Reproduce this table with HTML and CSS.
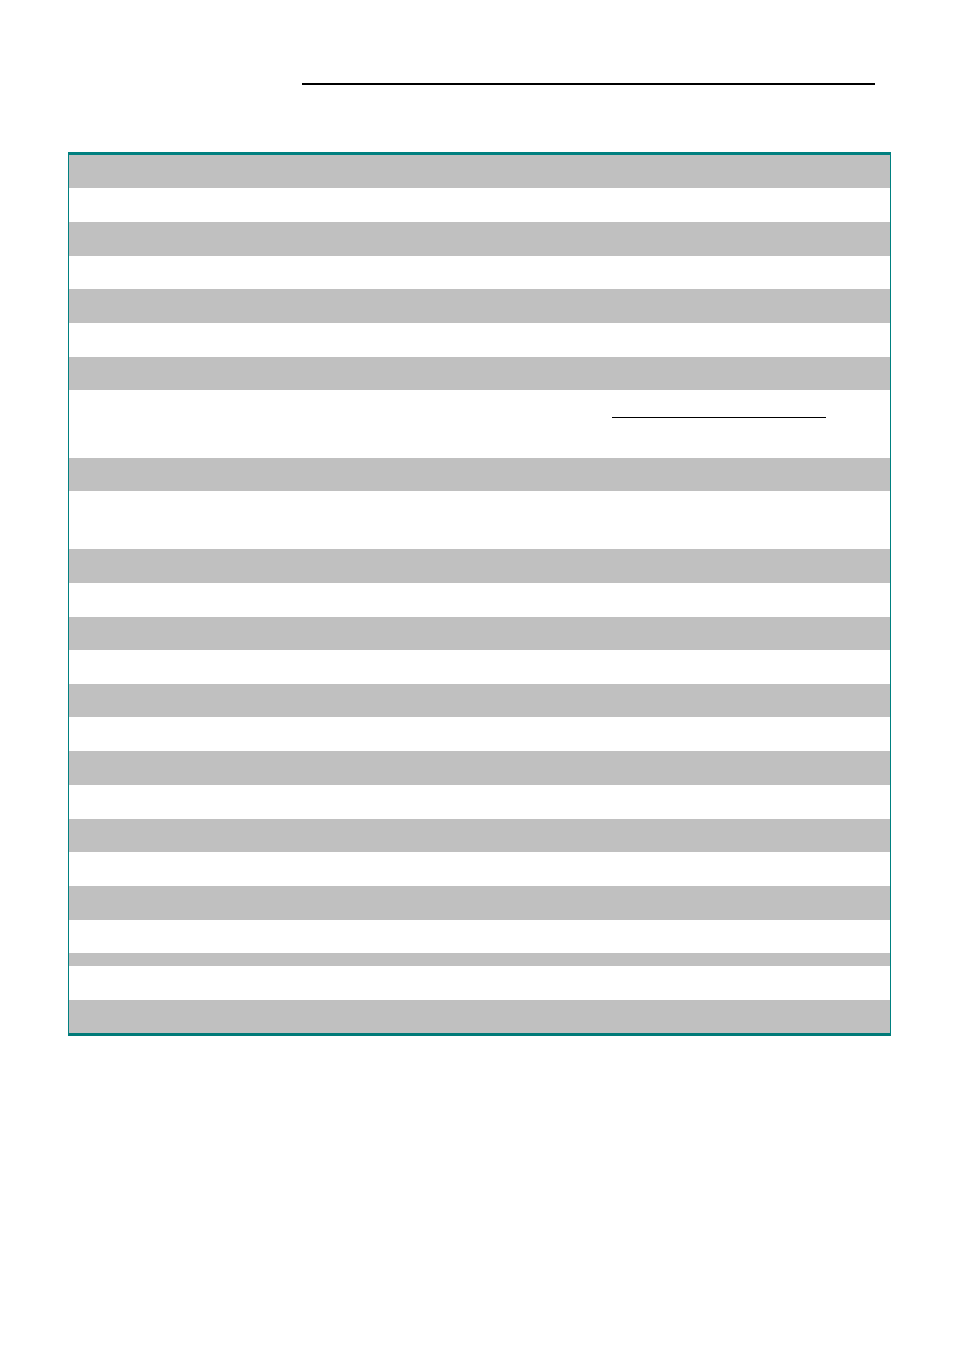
FILE: index.html
```html
<!DOCTYPE html>
<html>
<head>
<meta charset="utf-8">
<link rel="stylesheet" href="styles.css">
</head>
<body>
<div class="page">
  <div class="title-rule"></div>
  <div class="table">
    <div class="row g h33"></div>
    <div class="row w h34"></div>
    <div class="row g h34"></div>
    <div class="row w h33"></div>
    <div class="row g h34"></div>
    <div class="row w h34"></div>
    <div class="row g h33"></div>
    <div class="row w h68"><div class="field-line"></div></div>
    <div class="row g h33"></div>
    <div class="row w h58"></div>
    <div class="row g h34"></div>
    <div class="row w h34"></div>
    <div class="row g h33"></div>
    <div class="row w h34"></div>
    <div class="row g h33"></div>
    <div class="row w h34"></div>
    <div class="row g h34"></div>
    <div class="row w h34"></div>
    <div class="row g h33"></div>
    <div class="row w h34"></div>
    <div class="row g h34"></div>
    <div class="row w h33"></div>
    <div class="row g h13"></div>
    <div class="row w h34"></div>
    <div class="row g h33"></div>
  </div>
</div>
</body>
</html>
```
FILE: styles.css
```css
html, body {
  margin: 0;
  padding: 0;
  background: #ffffff;
  font-family: "Liberation Sans", Arial, sans-serif;
}
.page {
  width: 954px;
  height: 1350px;
  padding-top: 83px;
  box-sizing: border-box;
}
.title-rule {
  margin-left: 302px;
  width: 573px;
  height: 2px;
  background: #000000;
}
.table {
  margin-top: 67px;
  margin-left: 68px;
  width: 823px;
  box-sizing: border-box;
  border-top: 3px solid #008080;
  border-bottom: 3px solid #007a78;
  border-left: 1px solid #008080;
  border-right: 1px solid #008080;
  display: flex;
  flex-direction: column;
}
.row { width: 100%; }
.g { background: #c0c0c0; }
.w { background: #ffffff; }
.h13 { height: 13px; }
.h33 { height: 33px; }
.h34 { height: 34px; }
.h58 { height: 58px; }
.h68 { height: 68px; }
.field-line {
  margin-top: 27px;
  margin-left: 543px;
  width: 214px;
  height: 1px;
  background: #000000;
}
```
